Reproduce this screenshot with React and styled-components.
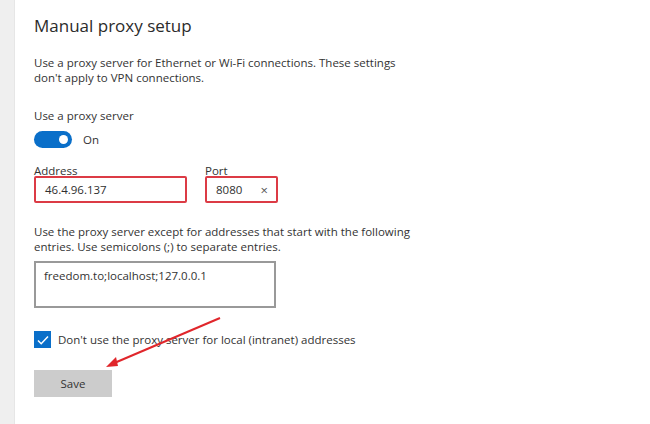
import React from "react";
import styled, { createGlobalStyle } from "styled-components";

const GlobalStyle = createGlobalStyle`
  html, body {
    margin: 0;
    padding: 0;
    background: #ffffff;
  }
  body {
    font-family: "Open Sans", "Noto Sans", sans-serif;
    color: #333333;
  }
`;

const Page = styled.div`
  display: flex;
  width: 650px;
  height: 424px;
  position: relative;
  overflow: hidden;
`;

const Strip = styled.div`
  width: 14px;
  background: #efefef;
  border-right: 1px solid #e6e6e6;
`;

const Content = styled.div`
  display: flex;
  flex-direction: column;
  padding: 13px 0 0 19px;
`;

const Title = styled.h1`
  margin: 0;
  font-size: 17px;
  font-weight: 400;
  color: #2b2b2b;
  line-height: 26px;
`;

const Text = styled.p`
  margin: ${p => p.mt || 0}px 0 0;
  font-size: 11.5px;
  line-height: 15px;
  width: ${p => p.w || 400}px;
`;

const Label = styled.div`
  font-size: 11.5px;
  line-height: 16px;
  margin-top: ${p => p.mt || 0}px;
`;

const ToggleRow = styled.div`
  display: flex;
  align-items: center;
  gap: 11px;
  margin-top: 7px;
  font-size: 11.5px;
`;

const Toggle = styled.div`
  width: 38px;
  height: 17px;
  border-radius: 9px;
  background: #0a6fc9;
  display: flex;
  align-items: center;
  justify-content: flex-end;
  padding-right: 4px;
  box-sizing: border-box;
`;

const Knob = styled.div`
  width: 9px;
  height: 9px;
  border-radius: 50%;
  background: #ffffff;
`;

const FieldRow = styled.div`
  display: flex;
  gap: 18px;
  margin-top: 17px;
`;

const Field = styled.div`
  display: flex;
  flex-direction: column;
`;

const FieldLabel = styled.div`
  font-size: 11.5px;
  line-height: 12px;
  margin-bottom: -1px;
`;

const Input = styled.div`
  width: ${p => p.w}px;
  height: 27px;
  box-sizing: border-box;
  border: 2px solid #dc3b45;
  border-radius: 2px;
  display: flex;
  align-items: center;
  justify-content: space-between;
  padding: 0 8px 0 9px;
  font-size: 11.5px;
  color: #2f2f2f;
`;

const Clear = styled.span`
  font-size: 13px;
  color: #555555;
`;

const TextArea = styled.div`
  width: 242px;
  height: 47px;
  box-sizing: border-box;
  border: 2px solid #999999;
  margin-top: 7px;
  padding: 5px 8px;
  font-size: 11.5px;
  line-height: 16px;
`;

const CheckRow = styled.div`
  display: flex;
  align-items: center;
  gap: 7px;
  margin-top: 23px;
  height: 17px;
  font-size: 11.5px;
`;

const Checkbox = styled.div`
  width: 17px;
  height: 17px;
  background: #0a6fc9;
  display: flex;
  align-items: center;
  justify-content: center;
`;

const SaveButton = styled.button`
  margin-top: 22px;
  width: 78px;
  height: 27px;
  border: none;
  background: #cccccc;
  font-family: inherit;
  font-size: 11.5px;
  color: #333333;
  padding: 0;
`;

const Arrow = styled.svg`
  position: absolute;
  left: 0;
  top: 0;
  pointer-events: none;
`;

export default function App() {
  return (
    <>
      <GlobalStyle />
      <Page>
        <Strip />
        <Content>
          <Title>Manual proxy setup</Title>
          <Text mt={16}>
            Use a proxy server for Ethernet or Wi-Fi connections. These settings
            <br />
            don't apply to VPN connections.
          </Text>
          <Label mt={23}>Use a proxy server</Label>
          <ToggleRow>
            <Toggle>
              <Knob />
            </Toggle>
            On
          </ToggleRow>
          <FieldRow>
            <Field>
              <FieldLabel>Address</FieldLabel>
              <Input w={153}>46.4.96.137</Input>
            </Field>
            <Field>
              <FieldLabel>Port</FieldLabel>
              <Input w={73}>
                8080
                <Clear>×</Clear>
              </Input>
            </Field>
          </FieldRow>
          <Text mt={21} w={390}>
            Use the proxy server except for addresses that start with the following
            <br />
            entries. Use semicolons (;) to separate entries.
          </Text>
          <TextArea>freedom.to;localhost;127.0.0.1</TextArea>
          <CheckRow>
            <Checkbox>
              <svg width="12" height="10" viewBox="0 0 12 10">
                <path d="M1 5.5 L4.2 8.7 L11 1.5" fill="none" stroke="#fff" strokeWidth="1.5" />
              </svg>
            </Checkbox>
            Don't use the proxy server for local (intranet) addresses
          </CheckRow>
          <SaveButton>Save</SaveButton>
        </Content>
        <Arrow width="650" height="424" viewBox="0 0 650 424">
          <line x1="220" y1="318" x2="112" y2="364" stroke="#e0262b" strokeWidth="2" />
          <path d="M106 367 L116 357 L118 366 Z" fill="#e0262b" />
        </Arrow>
      </Page>
    </>
  );
}
